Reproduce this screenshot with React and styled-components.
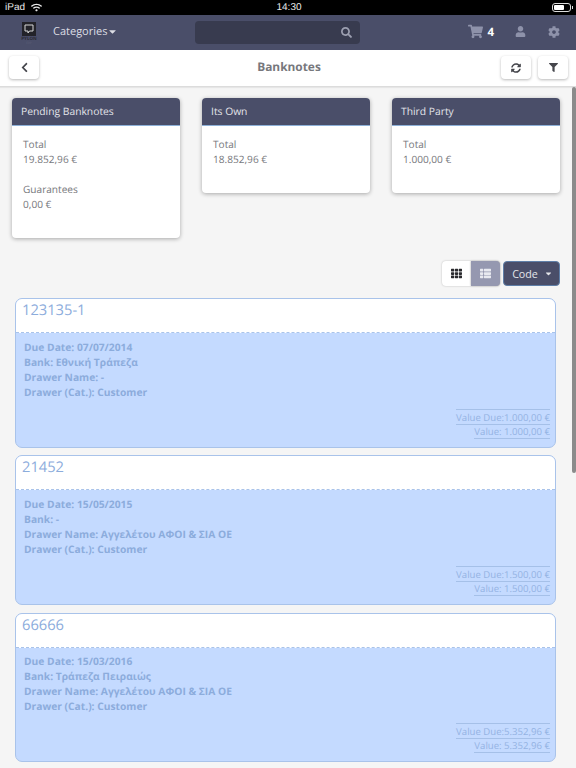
import React from 'react'
import styled, { createGlobalStyle } from 'styled-components'
import { FaShoppingCart, FaUser, FaCog, FaSearch, FaChevronLeft, FaSyncAlt, FaFilter, FaTh, FaThList, FaCaretDown, FaWifi } from 'react-icons/fa'

const GlobalStyle = createGlobalStyle`
  html, body { margin: 0; padding: 0; background: #f5f5f5; }
  body { font-family: "Open Sans", "Noto Sans", sans-serif; text-rendering: geometricPrecision; }
  * { box-sizing: border-box; }
`

const Page = styled.div`
  position: relative;
  width: 576px;
  height: 768px;
  overflow: hidden;
  background: #f5f5f5;
  display: flex;
  flex-direction: column;
`

const StatusBar = styled.div`
  height: 15px;
  flex: none;
  background: #000;
  color: #e8e8e8;
  font-family: "Liberation Sans", sans-serif;
  font-size: 10px;
  display: grid;
  grid-template-columns: 1fr auto 1fr;
  align-items: center;
  padding: 0 3px 0 5px;
`

const StatusLeft = styled.div`
  display: flex;
  align-items: center;
  gap: 6px;
`

const Battery = styled.div`
  justify-self: end;
  width: 19px;
  height: 9px;
  border: 1px solid #ddd;
  border-radius: 3px;
  padding: 1px;
  margin-right: 2px;
  position: relative;
  &::before {
    content: '';
    display: block;
    width: 10px;
    height: 100%;
    background: #fff;
    border-radius: 1px;
  }
  &::after {
    content: '';
    position: absolute;
    right: -3px;
    top: 2px;
    width: 1px;
    height: 3px;
    background: #ddd;
  }
`

const NavBar = styled.div`
  height: 35px;
  flex: none;
  background: #4a4e69;
  display: flex;
  align-items: center;
  padding: 0 16px 0 17px;
`

const Logo = styled.div`
  width: 24px;
  display: flex;
  flex-direction: column;
  align-items: center;
  color: #2c2c34;
  font-size: 4.5px;
  font-weight: 700;
  line-height: 5px;
  margin-right: 12px;
  margin-top: 1px;
  small { font-size: 3px; line-height: 3px; color: #5d6078; font-weight: 400; }
`

const LogoMark = styled.div`
  width: 14px;
  height: 14px;
  background: #232329;
  display: flex;
  align-items: center;
  justify-content: center;
  margin-bottom: 1px;
`

const Categories = styled.div`
  color: #dcdde4;
  font-size: 11px;
  display: flex;
  align-items: center;
  width: 142px;
  margin-top: -3px;
`

const Search = styled.div`
  width: 165px;
  height: 23px;
  border-radius: 4px;
  background: #383b4f;
  color: #9c9fb0;
  display: flex;
  align-items: center;
  justify-content: flex-end;
  padding-right: 8px;
  margin-top: -1px;
`

const NavIcons = styled.div`
  margin-left: auto;
  margin-top: -2px;
  display: flex;
  align-items: center;
  color: #8e92aa;
`

const CartCount = styled.span`
  color: #fff;
  font-size: 11.5px;
  font-weight: 700;
  margin: 2px 21px 0 4px;
`

const UserSlot = styled.span`
  display: flex;
  margin-right: 22px;
`

const SubHeader = styled.div`
  height: 37px;
  flex: none;
  background: #fff;
  border-bottom: 1px solid #dcdcdc;
  box-shadow: 0 1px 1px rgba(0, 0, 0, 0.06);
  display: flex;
  align-items: center;
  padding: 0 8px 0 9px;
  gap: 7px;
`

const Title = styled.div`
  flex: 1;
  text-align: center;
  color: #77787d;
  font-size: 11.9px;
  font-weight: 700;
  padding-left: 38px;
  margin-top: -2px;
`

const IconButton = styled.button`
  width: 30px;
  height: 23px;
  padding: 0;
  margin-top: -1px;
  border: none;
  border-radius: 4px;
  background: #fff;
  color: #45464c;
  display: flex;
  align-items: center;
  justify-content: center;
  box-shadow: 0 1px 3px rgba(0, 0, 0, 0.28);
`

const Content = styled.div`
  flex: 1;
  min-height: 0;
  display: flex;
  flex-direction: column;
`

const Summary = styled.div`
  display: flex;
  align-items: flex-start;
  gap: 22px;
  padding: 11px 16px 0 12px;
`

const SummaryCard = styled.div`
  width: 168px;
  background: #fff;
  border-radius: 4px;
  overflow: hidden;
  box-shadow: 0 1px 4px rgba(0, 0, 0, 0.32);
`

const SummaryHead = styled.div`
  height: 28px;
  background: #4a4e69;
  border-bottom: 1px solid #8db0d8;
  color: #e4e5ea;
  font-size: 10.3px;
  line-height: 28px;
  padding-left: 9px;
`

const SummaryBody = styled.div`
  padding: 11px 11px 26px;
  color: #77787d;
  font-size: 10.1px;
  line-height: 15px;
  display: flex;
  flex-direction: column;
  gap: 15px;
`

const Toolbar = styled.div`
  display: flex;
  justify-content: flex-end;
  padding: 23px 16px 0 0;
  height: 60px;
`

const ViewToggle = styled.button`
  width: 29px;
  height: 25px;
  padding: 0;
  border: none;
  background: ${p => (p.$active ? '#9598b0' : '#fff')};
  color: ${p => (p.$active ? '#e8e9f0' : '#2a2a2e')};
  border-radius: ${p => (p.$active ? '0 4px 4px 0' : '4px 0 0 4px')};
  box-shadow: 0 0 2px rgba(0, 0, 0, ${p => (p.$active ? 0.45 : 0.25)});
  display: flex;
  align-items: center;
  justify-content: center;
`

const SortButton = styled.button`
  width: 57px;
  height: 25px;
  margin-left: 3px;
  padding: 0 0 0 2px;
  border: 1px solid #5f7fa8;
  border-radius: 4px;
  background: #4a4e69;
  color: #e4e5ea;
  font-family: inherit;
  font-size: 10.7px;
  display: flex;
  align-items: center;
  justify-content: center;
  gap: 6px;
`

const List = styled.div`
  display: flex;
  flex-direction: column;
  gap: 7.75px;
  width: 541px;
  margin-left: 15px;
`

const Note = styled.div`
  height: 149.5px;
  flex: none;
  border: 1px solid #a9c3ea;
  border-radius: 7px;
  overflow: hidden;
  background: #c4daff;
  display: flex;
  flex-direction: column;
`

const NoteCode = styled.div`
  height: 34px;
  flex: none;
  background: #fff;
  border-bottom: 1px dashed #a9c3ea;
  color: #8cacdc;
  font-size: 14.7px;
  line-height: 22px;
  padding-left: 6px;
`

const NoteBody = styled.div`
  flex: 1;
  padding: 7.6px 5px 8px 8px;
  display: flex;
  flex-direction: column;
  color: #8cacdc;
`

const NoteLine = styled.div`
  font-size: 10.25px;
  font-weight: 700;
  line-height: 15px;
`

const NoteValues = styled.div`
  margin-top: auto;
  display: flex;
  flex-direction: column;
  align-items: flex-end;
  font-size: 9.6px;
  line-height: 13px;
  color: #94b3e3;
  span {
    border-bottom: 1px solid #a5c0e8;
  }
  span:first-child {
    border-top: 1px solid #a5c0e8;
    padding-top: 1px;
  }
`

const ScrollThumb = styled.div`
  position: absolute;
  right: 0;
  top: 87px;
  width: 4px;
  height: 386px;
  background: #8b8b8b;
  border-radius: 2px;
`

const summaries = [
  { title: 'Pending Banknotes', rows: [['Total', '19.852,96 €'], ['Guarantees', '0,00 €']] },
  { title: 'Its Own', rows: [['Total', '18.852,96 €']] },
  { title: 'Third Party', rows: [['Total', '1.000,00 €']] },
]

const notes = [
  { code: '123135-1', date: '07/07/2014', bank: 'Εθνική Τράπεζα', drawer: '-', due: '1.000,00 €', value: '1.000,00 €' },
  { code: '21452', date: '15/05/2015', bank: '-', drawer: 'Αγγελέτου ΑΦΟΙ & ΣΙΑ ΟΕ', due: '1.500,00 €', value: '1.500,00 €' },
  { code: '66666', date: '15/03/2016', bank: 'Τράπεζα Πειραιώς', drawer: 'Αγγελέτου ΑΦΟΙ & ΣΙΑ ΟΕ', due: '5.352,96 €', value: '5.352,96 €' },
]

export default function App() {
  return (
    <Page>
      <GlobalStyle />
      <StatusBar>
        <StatusLeft>iPad <FaWifi size={11} /></StatusLeft>
        <span>14:30</span>
        <Battery />
      </StatusBar>
      <NavBar>
        <Logo>
          <LogoMark>
            <svg width="10" height="10" viewBox="0 0 10 10" fill="none" stroke="#d8d8d8" strokeWidth="1">
              <path d="M1 1h8v6H5.5L4 9V7H1z" />
            </svg>
          </LogoMark>
          PYLON
          <small>ERP</small>
        </Logo>
        <Categories>Categories<FaCaretDown size={11} /></Categories>
        <Search><FaSearch size={11} /></Search>
        <NavIcons>
          <FaShoppingCart size={15} />
          <CartCount>4</CartCount>
          <UserSlot><FaUser size={11} /></UserSlot>
          <FaCog size={12} />
        </NavIcons>
      </NavBar>
      <SubHeader>
        <IconButton><FaChevronLeft size={11} /></IconButton>
        <Title>Banknotes</Title>
        <IconButton><FaSyncAlt size={10} /></IconButton>
        <IconButton><FaFilter size={9} /></IconButton>
      </SubHeader>
      <Content>
        <Summary>
          {summaries.map(card => (
            <SummaryCard key={card.title}>
              <SummaryHead>{card.title}</SummaryHead>
              <SummaryBody>
                {card.rows.map(([label, value]) => (
                  <div key={label}>{label}<br />{value}</div>
                ))}
              </SummaryBody>
            </SummaryCard>
          ))}
        </Summary>
        <Toolbar>
          <ViewToggle><FaTh size={11} /></ViewToggle>
          <ViewToggle $active><FaThList size={11} /></ViewToggle>
          <SortButton>Code <FaCaretDown size={9} /></SortButton>
        </Toolbar>
        <List>
          {notes.map(n => (
            <Note key={n.code}>
              <NoteCode>{n.code}</NoteCode>
              <NoteBody>
                <NoteLine>Due Date: {n.date}</NoteLine>
                <NoteLine>Bank: {n.bank}</NoteLine>
                <NoteLine>Drawer Name: {n.drawer}</NoteLine>
                <NoteLine>Drawer (Cat.): Customer</NoteLine>
                <NoteValues>
                  <span>Value Due:{n.due}</span>
                  <span>Value: {n.value}</span>
                </NoteValues>
              </NoteBody>
            </Note>
          ))}
        </List>
      </Content>
      <ScrollThumb />
    </Page>
  )
}
